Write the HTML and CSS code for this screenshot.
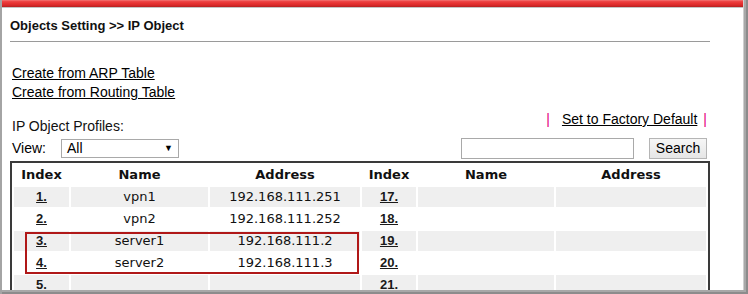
FILE: index.html
```html
<!DOCTYPE html>
<html>
<head>
<meta charset="utf-8">
<link rel="stylesheet" href="styles.css">
</head>
<body>
<div class="frame">
  <div class="topbar"></div>
  <div class="content">
    <h1 class="title">Objects Setting &gt;&gt; IP Object</h1>
    <div class="rule"></div>
    <div class="links">
      <a href="#" class="link">Create from ARP Table</a>
      <a href="#" class="link">Create from Routing Table</a>
    </div>
    <div class="toolbar">
      <div class="tool-left">
        <div class="label">IP Object Profiles:</div>
        <div class="view-row">
          <span class="view-label">View:</span>
          <div class="select"><span>All</span><span class="arrow">&#9660;</span></div>
        </div>
      </div>
      <div class="tool-right">
        <div class="factory"><span class="pipe">|</span><a href="#" class="link">Set to Factory Default</a><span class="pipe">|</span></div>
        <div class="search-row">
          <div class="search-input"></div>
          <div class="search-btn">Search</div>
        </div>
      </div>
    </div>
    <div class="table-wrap">
      <table class="grid">
        <colgroup>
          <col class="c-idx"><col class="c-name"><col class="c-addr">
          <col class="c-idx2"><col class="c-name2"><col class="c-addr">
        </colgroup>
        <thead>
          <tr><th>Index</th><th>Name</th><th>Address</th><th>Index</th><th>Name</th><th>Address</th></tr>
        </thead>
        <tbody>
          <tr class="odd"><td class="idx"><a href="#">1.</a></td><td>vpn1</td><td>192.168.111.251</td><td class="idx"><a href="#">17.</a></td><td></td><td></td></tr>
          <tr><td class="idx"><a href="#">2.</a></td><td>vpn2</td><td>192.168.111.252</td><td class="idx"><a href="#">18.</a></td><td></td><td></td></tr>
          <tr class="odd"><td class="idx"><a href="#">3.</a></td><td>server1</td><td>192.168.111.2</td><td class="idx"><a href="#">19.</a></td><td></td><td></td></tr>
          <tr><td class="idx"><a href="#">4.</a></td><td>server2</td><td>192.168.111.3</td><td class="idx"><a href="#">20.</a></td><td></td><td></td></tr>
          <tr class="odd"><td class="idx"><a href="#">5.</a></td><td></td><td></td><td class="idx"><a href="#">21.</a></td><td></td><td></td></tr>
        </tbody>
      </table>
      <div class="highlight"></div>
    </div>
  </div>
  <div class="shadow"></div>
</div>
</body>
</html>
```

FILE: styles.css
```css
* { box-sizing: border-box; }
html, body { margin: 0; padding: 0; background: #fff; }
.frame {
  position: relative;
  width: 748px;
  height: 294px;
  overflow: hidden;
  background: #fff;
  border-left: 2px solid #a4a4a4;
  font-family: "Liberation Sans", Arial, sans-serif;
  font-size: 14px;
  color: #000;
}
.topbar {
  height: 8px;
  margin-right: 3px;
  background: linear-gradient(#f58080 0, #ee4a4a 1px, #e83434 3px, #dc2a2a 5px, #b42020 7px, #c4c4c4 7px);
}
.content { padding-left: 8px; padding-right: 38px; }
.title {
  margin: 10px 0 0 0;
  font-size: 13px;
  line-height: 16px;
  font-weight: bold;
  color: #111;
}
.rule { height: 1px; background: #9a9a9a; margin-top: 7px; }
.links {
  display: flex;
  flex-direction: column;
  align-items: flex-start;
  margin-top: 22px;
  padding-left: 2px;
}
.link { color: #000; text-decoration: underline; line-height: 19px; font-size: 14px; }
.toolbar {
  display: flex;
  justify-content: space-between;
  margin-top: 8px;
  padding-left: 2px;
}
.tool-left { padding-top: 7px; }
.label { line-height: 19px; color: #111; font-size: 14px; }
.view-row { display: flex; align-items: center; margin-top: 3px; }
.view-label { width: 49px; line-height: 19px; font-size: 14px; }
.select {
  width: 118px;
  height: 19px;
  border: 1px solid #a9a9a9;
  display: flex;
  justify-content: space-between;
  align-items: center;
  padding: 0 5px 0 5px;
  line-height: 17px;
  font-size: 14px;
}
.arrow { font-size: 9px; }
.tool-right { display: flex; flex-direction: column; align-items: flex-end; }
.factory { line-height: 19px; display: flex; }
.pipe { color: #e6007e; font-size: 14px; }
.factory .pipe:first-child { margin-right: 12px; }
.factory .pipe:last-child { margin-left: 6px; margin-right: 3px; }
.search-row { display: flex; margin-top: 9px; margin-right: 3px; gap: 15px; }
.search-input { width: 173px; height: 21px; border: 1px solid #a9a9a9; }
.search-btn {
  width: 58px;
  height: 21px;
  border: 1px solid #b5b5b5;
  background: linear-gradient(#f6f6f6, #e6e6e6);
  text-align: center;
  line-height: 19px;
  font-size: 14px;
}
.table-wrap { position: relative; margin-top: 2px; }
.grid {
  width: 700px;
  table-layout: fixed;
  border-collapse: separate;
  border-spacing: 2px;
  border: 2px solid #3a3a3a;
  font-family: "DejaVu Sans", Verdana, sans-serif;
  font-size: 13px;
}
.c-idx { width: 55px; }
.c-name { width: 137px; }
.c-addr { width: 150px; }
.c-idx2 { width: 54px; }
.c-name2 { width: 136px; }
.grid th, .grid td { height: 20px; padding: 0; text-align: center; vertical-align: middle; line-height: 16px; }
.grid th { font-weight: bold; font-size: 13px; color: #111; }
.grid td { color: #111; }
.grid tr.odd td { background: #efefef; }
.grid td.idx a {
  font-family: "Liberation Sans", Arial, sans-serif;
  font-weight: bold;
  font-size: 13px;
  color: #1a1a1a;
  text-decoration: underline;
}
.highlight {
  position: absolute;
  left: 15px;
  top: 71px;
  width: 334px;
  height: 42px;
  border: 2px solid #b01818;
}
.shadow {
  position: absolute;
  right: 0;
  top: 0;
  bottom: 0;
  left: -2px;
  pointer-events: none;
  box-shadow: inset -2px -2px 0 #8c8c8c, inset -4px -4px 0 #a8a8a8, inset -5px -4px 0 #cfcfcf;
}
```
